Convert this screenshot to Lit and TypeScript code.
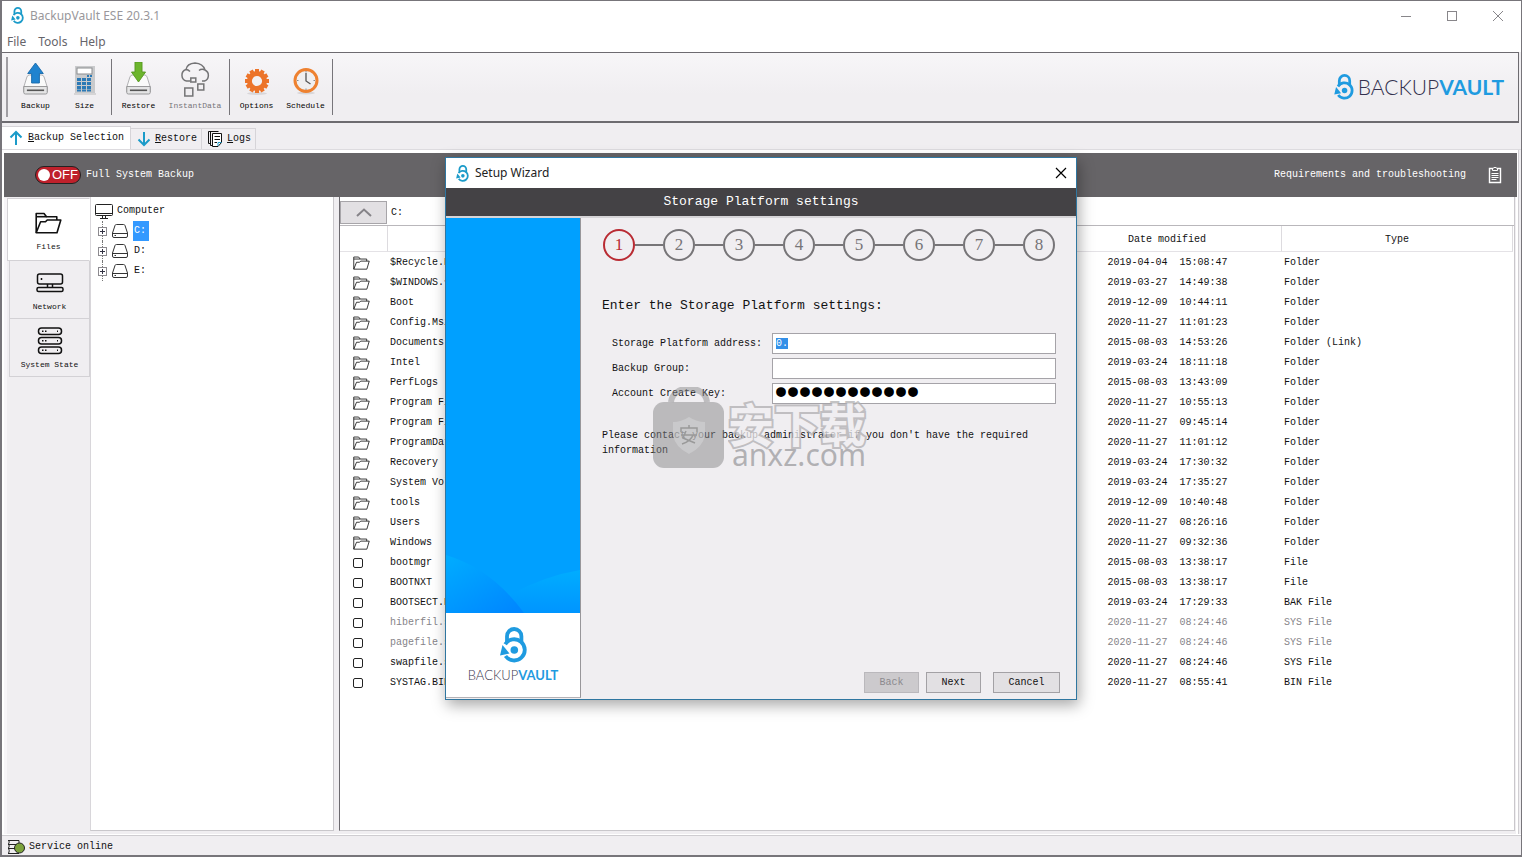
import { LitElement, html, css, svg, nothing } from "lit";
import { customElement, state } from "lit/decorators.js";
import { classMap } from "lit/directives/class-map.js";

interface Entry {
  name: string;
  date: string;
  type: string;
  dim?: boolean;
}

const ENTRIES: Entry[] = [
  { name: "$Recycle.Bin", date: "2019-04-04  15:08:47", type: "Folder" },
  { name: "$WINDOWS.~BT", date: "2019-03-27  14:49:38", type: "Folder" },
  { name: "Boot", date: "2019-12-09  10:44:11", type: "Folder" },
  { name: "Config.Msi", date: "2020-11-27  11:01:23", type: "Folder" },
  { name: "Documents", date: "2015-08-03  14:53:26", type: "Folder (Link)" },
  { name: "Intel", date: "2019-03-24  18:11:18", type: "Folder" },
  { name: "PerfLogs", date: "2015-08-03  13:43:09", type: "Folder" },
  { name: "Program Files", date: "2020-11-27  10:55:13", type: "Folder" },
  { name: "Program Files", date: "2020-11-27  09:45:14", type: "Folder" },
  { name: "ProgramData", date: "2020-11-27  11:01:12", type: "Folder" },
  { name: "Recovery", date: "2019-03-24  17:30:32", type: "Folder" },
  { name: "System Volume", date: "2019-03-24  17:35:27", type: "Folder" },
  { name: "tools", date: "2019-12-09  10:40:48", type: "Folder" },
  { name: "Users", date: "2020-11-27  08:26:16", type: "Folder" },
  { name: "Windows", date: "2020-11-27  09:32:36", type: "Folder" },
  { name: "bootmgr", date: "2015-08-03  13:38:17", type: "File" },
  { name: "BOOTNXT", date: "2015-08-03  13:38:17", type: "File" },
  { name: "BOOTSECT.BAK", date: "2019-03-24  17:29:33", type: "BAK File" },
  { name: "hiberfil.sys", date: "2020-11-27  08:24:46", type: "SYS File", dim: true },
  { name: "pagefile.sys", date: "2020-11-27  08:24:46", type: "SYS File", dim: true },
  { name: "swapfile.sys", date: "2020-11-27  08:24:46", type: "SYS File" },
  { name: "SYSTAG.BIN", date: "2020-11-27  08:55:41", type: "BIN File" },
];

const lock = (w: number, h: number) => html`<svg class="lock" width=${w} height=${h} viewBox="0 0 27 36" fill="none" aria-hidden="true">
  <path d="M7 16V9.2a7 7 0 0 1 14.4 0V16" stroke="currentColor" stroke-width="3.8"/>
  <path d="M5.200 17.2A10.600 10.600 0 1 1 5.500 29" stroke="currentColor" stroke-width="3.8"/>
  <path d="M2.500 18L9.500 26.500L0 28.400Z" fill="currentColor"/>
  <circle cx="14.300" cy="23" r="3.800" fill="currentColor"/>
</svg>`;

const folder = (w: number, h: number, sw: number) => html`<svg width=${w} height=${h} viewBox="0 0 27 22" fill="none" stroke="currentColor" stroke-width=${sw} stroke-linejoin="round" aria-hidden="true">
  <path d="M1.2 20.8V1.5H9l2.5 3.2h10.300V8"/><path d="M1.2 4.700H11.500"/>
  <path d="M1.200 20.800L5.600 9.800H10.500L12.200 8H25.800L22 20.800Z"/>
</svg>`;

const drive = html`<svg width="16" height="14" viewBox="0 0 16 14" fill="none" stroke="#333" aria-hidden="true">
  <path d="M3 1.500Q3.300.5 4.500.5H11.500Q12.700.5 13 1.500L15.500 9V12Q15.500 13.500 14 13.500H2Q.5 13.500.5 12V9Z"/><path d="M1 9.500H15M2.500 11.500H4"/>
</svg>`;

const driveBase = svg`
  <path d="M9 13H25Q27 13 28 15L32 25V30H2V25L6 15Q7 13 9 13Z" fill="#fafafa" stroke="#a9a9ab"/>
  <path d="M2 24.500H32V30.500Q32 32 30 32H4Q2 32 2 30.500Z" fill="#e4e4e5" stroke="#8f8f91"/>
  <path d="M6 28.300H28" stroke="#555" stroke-width="1.600"/>`;

const GEAR_TEETH = Array.from({ length: 12 }, (_, i) => i * 30);

const TOOL_ICONS: Record<string, unknown> = {
  Backup: html`<svg width="25" height="36" viewBox="1 0 32 36" preserveAspectRatio="none" aria-hidden="true">${driveBase}
    <path d="M17 1L27 11.500H22V21H12V11.500H7Z" fill="#1f83cf" stroke="#1769aa"/></svg>`,
  Restore: html`<svg width="25" height="36" viewBox="1 0 32 36" preserveAspectRatio="none" aria-hidden="true">${driveBase}
    <path d="M17 20L8 10H12.500V0H21.500V10H26Z" fill="#6cb52d" stroke="#54951f"/></svg>`,
  Size: html`<svg width="22" height="36" viewBox="0 0 22 36" aria-hidden="true">
    <rect x="1" y="4" width="20" height="27" fill="#c9cacc"/><rect x="3" y="6" width="15" height="6" fill="#fff" stroke="#8c8d90"/>
    ${[16, 20, 24].map((y) => [3, 8, 13].map((x) => svg`<rect x=${x} y=${y} width="4" height="3" fill="#2c79b5"/>`))}
    <rect x="13" y="13" width="2" height="2" fill="#2c79b5"/><rect x="16" y="13" width="2" height="2" fill="#2c79b5"/><path d="M3 28.500H18" stroke="#2c79b5" stroke-width="2" stroke-dasharray="4 1"/><path d="M0 32H22" stroke="#bbb"/></svg>`,
  InstantData: html`<svg width="33" height="36" viewBox="0 0 33 36" fill="none" stroke="#747476" stroke-width="1.500" aria-hidden="true">
    <path d="M11 19H7.500A6 6 0 0 1 7 7.500Q8 1.500 16 1Q24 1.500 26 8A6 6 0 0 1 25.500 19H23M6.500 7.500Q9 7.300 11 9.500M20 8.500Q22.500 6.500 26 8"/>
    <rect x="11.800" y="16" width="5" height="4"/><rect x="18.800" y="22" width="6" height="6"/><rect x="5.800" y="26" width="8" height="8"/></svg>`,
  Options: html`<svg width="26" height="36" viewBox="0 0 26 36" fill="none" aria-hidden="true">
    <ellipse cx="13" cy="31.500" rx="10" ry="1.500" fill="#d8d6d9"/>
    <circle cx="13" cy="19" r="7.600" stroke="#ec742a" stroke-width="5"/>
    ${GEAR_TEETH.map((a) => svg`<rect x="11" y="7" width="4" height="4" fill="#ec742a" transform=${`rotate(${a} 13 19)`}/>`)}</svg>`,
  Schedule: html`<svg width="26" height="36" viewBox="0 0 26 36" fill="none" aria-hidden="true">
    <ellipse cx="13" cy="31" rx="9" ry="1.500" fill="#d8d6d9"/>
    <circle cx="13" cy="18.500" r="11" fill="#f0eff0" stroke="#ee8130" stroke-width="3"/>
    <path d="M13 11V19L17.500 22" stroke="#555" stroke-width="1.300"/><path d="M13 9v1.500M13 26.500V28M4 18.500H5.500M20.500 18.500H22" stroke="#888"/></svg>`,
};

const TOOL_GROUPS = [["Backup", "Size"], ["Restore", "InstantData"], ["Options", "Schedule"]];

const networkIcon = html`<svg width="28" height="20" viewBox="0 0 28 20" fill="none" stroke="#111" stroke-width="1.500" aria-hidden="true">
  <rect x="1.500" y="1" width="25" height="10" rx="2"/><path d="M11.500 11V14.500M16.500 11V14.500M5.500 5V7"/><rect x="1" y="14.500" width="26" height="4" rx="1.500"/></svg>`;
const serverIcon = html`<svg width="26" height="28" viewBox="0 0 26 28" fill="none" stroke="#111" stroke-width="1.500" aria-hidden="true">
  ${[1, 10.5, 20].map((y) => svg`<rect x="1.500" y=${y} width="23" height="6.500" rx="3"/><path d=${`M5 ${y + 3.2}H6.500M8 ${y + 3.2}H9.500M20 ${y + 3.2}H21`}/>`)}</svg>`;

@customElement("setup-wizard")
export class SetupWizard extends LitElement {
  @state() private step = 1;

  static styles = css`
    :host { display: flex; flex-direction: column; box-sizing: border-box; border: 1px solid #2f76a0; background: #f0eef1; font: 10px/15px "Liberation Mono", monospace; color: #111; box-shadow: 2px 5px 14px rgba(0, 0, 0, .35); }
    .title { display: flex; align-items: center; height: 30px; background: #fff; padding: 0 9px 0 10px; gap: 6px; font: 12px/16px "Noto Sans", sans-serif; color: #222; }
    .title .lock { color: #1b9bc9; }
    .title span { flex: 1; }
    .close { border: 0; background: none; padding: 0; width: 12px; height: 12px; display: grid; place-items: center; }
    .banner { margin: 0; height: 28px; background: #444245; color: #fff; font: 13px/28px "Liberation Mono", monospace; text-align: center; border-bottom: 2px solid #d6d4d7; }
    .body { display: grid; grid-template-columns: 135px 1fr; flex: 1; }
    .side { display: flex; flex-direction: column; border-right: 1px solid #98969a; margin-bottom: 1px; border-bottom: 1px solid #b4b2b6; background: #fff; }
    .art { flex: 1; min-height: 0; width: 100%; display: block; background: #00a0ff; }
    .brand { height: 84px; display: flex; flex-direction: column; align-items: center; justify-content: center; gap: 4px; font: 300 13px/16px Lato, sans-serif; color: #3c3a50; }
    .brand .lock, .brand b { color: #1f9be0; }
    .brand b { font-weight: 700; }
    .pane { display: flex; flex-direction: column; padding: 11px 16px 6px 21px; }
    .steps { display: flex; list-style: none; margin: 0; padding: 0 0 0 1px; }
    .steps li { display: flex; align-items: center; color: #777578; }
    .steps li + li::before { content: ""; width: 28px; height: 2px; background: #777578; }
    .num { box-sizing: border-box; width: 32px; height: 32px; border: 2px solid currentColor; border-radius: 50%; display: grid; place-items: center; font: 17px/20px "Liberation Serif", serif; }
    .steps .current { color: #b92b33; }
    h2 { margin: 35px 0 17px; font-size: 13px; line-height: 20px; font-weight: 400; }
    .form { display: grid; grid-template-columns: 160px 284px; row-gap: 4px; align-items: center; padding-left: 10px; }
    .form input { box-sizing: border-box; width: 100%; height: 21px; border: 1px solid #a5a3a8; border-radius: 0; background: #fff; padding: 0 3px; font: inherit; color: #111; outline: none; }
    .form input::selection { background: #3390e8; color: #fff; }
    .form .key { font: 700 20px/19px "Liberation Mono", monospace; color: #000; -webkit-text-stroke: 4px #000; padding: 0 2px; }
    p { margin: 24px 0 0; }
    .buttons { margin-top: auto; display: flex; justify-content: flex-end; gap: 7px; }
    .buttons button { box-sizing: border-box; height: 21px; width: 55px; border: 1px solid #a3a1a5; background: #e2e0e3; color: #111; font: inherit; padding: 0; }
    .buttons .cancel { width: 67px; margin-left: 5px; }
    .buttons button:disabled { background: #cccacd; border-color: #bab8bc; color: #8b898d; }
    .mark { position: absolute; left: 207px; top: 229px; display: flex; gap: 4px; color: rgba(140, 140, 142, .5); pointer-events: none; }
    .words { display: flex; flex-direction: column; padding-top: 14px; }
    .cn { font: 700 46px/42px "Noto Sans CJK SC", sans-serif; color: #f0eef1; -webkit-text-stroke: 4px #b0afb1; paint-order: stroke fill; opacity: .75; }
    .latin { font: 30px/24px "Noto Sans", sans-serif; padding-left: 4px; color: rgba(135, 135, 138, .6); }
  `;

  firstUpdated() {
    const field = this.renderRoot.querySelector<HTMLInputElement>("#address");
    field?.focus();
    field?.select();
  }

  render() {
    return html`
      <div class="title">${lock(13, 17)}<span>Setup Wizard</span>
        <button class="close" aria-label="Close"><svg width="12" height="12" stroke="#000" stroke-width="1.200"><path d="M1 1L11 11M11 1L1 11"/></svg></button>
      </div>
      <h1 class="banner">Storage Platform settings</h1>
      <div class="body">
        <div class="side">
          <svg class="art" viewBox="0 0 134 395" preserveAspectRatio="xMidYMax slice" aria-hidden="true">
            <defs>
              <linearGradient id="g1" x1="0" y1="0" x2="0.800" y2="1"><stop offset="0" stop-color="#00adff"/><stop offset="1" stop-color="#0088ff"/></linearGradient>
              <linearGradient id="g2" x1="0" y1="0" x2="0" y2="1"><stop offset="0" stop-color="#00adff"/><stop offset="1" stop-color="#0095ff"/></linearGradient>
            </defs>
            <rect width="134" height="395" fill="#00a0ff"/>
            <path d="M60 395L66 376Q98 358 134 352V395Z" fill="url(#g2)"/>
            <path d="M0 337Q46 351 78 395H0Z" fill="url(#g1)"/>
          </svg>
          <div class="brand">${lock(27, 36)}<span>BACKUP<b>VAULT</b></span></div>
        </div>
        <div class="pane">
          <ol class="steps">
            ${[1, 2, 3, 4, 5, 6, 7, 8].map((n) => html`<li class=${classMap({ current: n === this.step })}><span class="num">${n}</span></li>`)}
          </ol>
          <h2>Enter the Storage Platform settings:</h2>
          <div class="form">
            <label for="address">Storage Platform address:</label><input id="address" type="text" value="0." />
            <label for="group">Backup Group:</label><input id="group" type="text" />
            <label for="key">Account Create Key:</label><input id="key" class="key" type="password" value="aaaaaaaaaaaa" />
          </div>
          <p>Please contact your backup administrator if you don't have the required information</p>
          <div class="buttons">
            <button disabled>Back</button><button>Next</button><button class="cancel">Cancel</button>
          </div>
        </div>
      </div>
      <div class="mark">
        <svg width="71" height="81" viewBox="0 0 71 81" fill="none" aria-hidden="true">
          <path d="M18 15C20-3 52-3 54 15" stroke="currentColor" stroke-width="6"/>
          <rect y="15" width="71" height="66" rx="11" fill="#858587" fill-opacity=".5"/>
          <path d="M36 30Q44 35 52 35V48Q50 60 36 67Q22 60 20 48V35Q28 35 36 30Z" fill="#d8d7d9" fill-opacity=".5"/>
          <path d="M28 45V41H44V45M36 38V41M28 48H44M33 44L30 51L42 56M40 48Q38 54 29 57" stroke="#999" stroke-width="1.500"/>
        </svg>
        <div class="words"><span class="cn">安下载</span><span class="latin">anxz.com</span></div>
      </div>`;
  }
}

@customElement("app-root")
export class AppRoot extends LitElement {
  @state() private side = "Files";

  static styles = css`
    :host { position: relative; display: flex; flex-direction: column; box-sizing: border-box; height: 100vh; overflow: hidden; border: 1px solid #77757a; border-width: 1px 1px 2px 2px; background: #f0eef1; font: 10px/20px "Liberation Mono", monospace; color: #111; }
    button { font: inherit; color: inherit; background: none; border: 0; padding: 0; }
    svg { flex: none; }
    .title { display: flex; align-items: center; height: 29px; background: #fff; padding: 0 17px 0 9px; gap: 6px; font: 12px/16px "Noto Sans", sans-serif; color: #99979b; }
    .title .lock { color: #1b9bc9; }
    .title .name { flex: 1; }
    .controls { display: flex; gap: 34px; }
    .controls button { width: 12px; height: 12px; display: block; }
    .menu { display: flex; gap: 12px; height: 22px; background: #fff; padding-left: 5px; font: 12px/24px "Noto Sans", sans-serif; color: #66646a; }
    .toolbar { display: flex; align-items: center; border: 1px solid #6d6b70; border-left: 0; border-bottom-width: 2px; margin-right: 2px; height: 68px; padding: 0 14px 0 4px; background: linear-gradient(#f7f6f8, #f0eef1 60%); }
    .grip { width: 2px; height: 60px; background: #a09ea3; margin-right: 3px; }
    .group { display: flex; }
    .tool { display: flex; flex-direction: column; align-items: center; width: 49px; font-size: 8px; line-height: 12px; color: #000; gap: 2px; }
    .tool.wide { width: 64px; color: #77757a; }
    .sep { width: 1px; height: 56px; background: #77757a; margin: 0 2px; }
    .brand { margin-left: auto; display: flex; align-items: center; gap: 4px; font: 300 21px/24px Lato, sans-serif; color: #33304e; }
    .brand .lock, .brand b { color: #1f9be0; }
    .brand b { font-weight: 700; }
    .tabs { display: flex; align-items: flex-end; height: 23px; margin-top: 3px; border-bottom: 1px solid #dddbdf; }
    .tabs button { box-sizing: border-box; display: flex; align-items: center; gap: 4px; height: 21px; padding: 0 4px 0 6px; border: 1px solid #d6d4d8; border-left: 0; border-bottom: 0; }
    .tabs .active { background: #fff; height: 23px; padding: 0 6px 0 7px; gap: 5px; }
    .page { flex: 1; min-height: 0; display: flex; flex-direction: column; background: #fff; padding: 3px 2px 0; margin-right: 2px; border-right: 1px solid #d0ced2; }
    .strip { display: flex; align-items: center; height: 44px; background: #666467; color: #fff; padding: 0 15px 0 31px; margin-right: -1px; }
    .switch { position: relative; display: flex; align-items: center; gap: 5px; }
    .switch input { appearance: none; position: absolute; inset: 0; margin: 0; opacity: 0; }
    .strip a { margin-left: auto; color: #fff; text-decoration: none; display: flex; align-items: center; gap: 22px; }
    .off { font: 13px/16px "Liberation Sans", sans-serif; box-sizing: border-box; height: 18px; width: 46px; border: 1px solid #222; border-radius: 9px; background: #bf202b; display: flex; align-items: center; gap: 2px; padding-left: 2px; }
    .off::before { content: ""; width: 12px; height: 12px; border-radius: 50%; background: #fff; }
    .content { flex: 1; min-height: 0; display: grid; grid-template-columns: 86px 244px 5px 1fr; background: #f0eef1; }
    .sidetabs { display: flex; flex-direction: column; align-items: flex-end; border-left: 3px solid #f7f5f8; margin-top: 1px; }
    .sidetabs button { box-sizing: border-box; width: 81px; height: 58px; display: flex; flex-direction: column; align-items: center; padding-top: 8px; gap: 5px; font-size: 8px; line-height: 10px; border: 1px solid #d3d1d5; border-top: 0; }
    .sidetabs svg { height: 28px; }
    .sidetabs .on { width: 83px; height: 63px; background: #fff; border-top: 1px solid #d3d1d5; border-right-color: #fff; padding-top: 10px; }
    .tree { background: #fff; border: 1px solid #c9c7cb; border-left-color: #d8d6da; border-top: 0; padding: 4px; margin-bottom: 4px; overflow: hidden; }
    .tree ul { list-style: none; margin: 0; padding: 0; }
    .node { display: flex; align-items: center; height: 20px; gap: 4px; }
    .kids .node { gap: 5px; padding-left: 3px; position: relative; }
    .kids .node::before { content: ""; position: absolute; left: 7px; top: 0; height: 20px; border-left: 1px dotted #777; }
    .plus { position: relative; box-sizing: border-box; width: 9px; height: 9px; border: 1px solid #8c8a8f; background: #fff; display: block; }
    .plus svg { display: block; }
    .sel { background: #3399ff; color: #fff; }
    .node .lbl { padding: 0 3px 0 1px; }
    .split { background: #f0eef1; }
    .list { border: 1px solid #c9c7cb; border-left: 1px solid #6b696e; border-top: 0; background: #fff; margin: 0 1px 4px 0; overflow: hidden; }
    .path { display: flex; align-items: center; gap: 4px; height: 29px; padding-top: 3px; border-bottom: 1px solid #b9b7bb; box-sizing: border-box; }
    .path button { box-sizing: border-box; width: 47px; height: 23px; border: 1px solid #a7a5a9; background: #e2e0e3; display: grid; place-items: center; }
    table { width: 100%; border-collapse: separate; border-spacing: 0; table-layout: fixed; padding-right: 1px; }
    th { box-sizing: border-box; height: 26px; padding: 2px 0 0; font-weight: 400; text-align: center; border-right: 1px solid #dddbdf; border-bottom: 1px solid #e4e2e6; }
    td { height: 18px; padding: 2px 0 0 2px; white-space: pre; overflow: hidden; line-height: 18px; }
    .c-icon { width: 48px; }
    .c-date { width: 229px; }
    .c-type { width: 231px; }
    .icon { padding-left: 13px; padding-top: 2px; line-height: 0; }
    .icon input { appearance: none; box-sizing: border-box; width: 10px; height: 10px; border: 1px solid #222; border-radius: 2px; margin: 0; display: block; }
    .date { text-align: center; padding-left: 0; }
    .dim td { color: #858388; }
    .status { box-sizing: border-box; display: flex; align-items: center; gap: 4px; height: 20px; padding: 2px 0 0 5px; border-top: 1px solid #cfcdd1; box-shadow: 0 -1px 0 #fff; }
    setup-wizard { position: absolute; inset: 0; margin: auto; width: 632px; height: 543px; left: -1px; top: 1px; }
  `;

  private tool(name: string) {
    return html`<button class=${classMap({ tool: true, wide: name === "InstantData" })}>${TOOL_ICONS[name]}<span>${name}</span></button>`;
  }

  private sideTab(name: string, icon: unknown) {
    return html`<button class=${this.side === name ? "on" : ""} @click=${() => (this.side = name)}>${icon}<span>${name}</span></button>`;
  }

  render() {
    return html`
      <header class="title">${lock(13, 17)}<span class="name">BackupVault ESE 20.3.1</span>
        <div class="controls">
          <button aria-label="Minimize"><svg width="12" height="12" stroke="#88868a"><path d="M1 6.500H11"/></svg></button>
          <button aria-label="Maximize"><svg width="12" height="12" fill="none" stroke="#88868a"><rect x="1.500" y="1.500" width="9" height="9"/></svg></button>
          <button aria-label="Close"><svg width="12" height="12" stroke="#88868a"><path d="M1 1L11 11M11 1L1 11"/></svg></button>
        </div>
      </header>
      <nav class="menu"><button>File</button><button>Tools</button><button>Help</button></nav>
      <div class="toolbar">
        <span class="grip"></span>
        ${TOOL_GROUPS.map((g) => html`<div class="group">${g.map((n) => this.tool(n))}</div><span class="sep"></span>`)}
        <div class="brand">${lock(20, 26)}<span>BACKUP<b>VAULT</b></span></div>
      </div>
      <nav class="tabs">
        <button class="active"><svg width="14" height="16" fill="none" stroke="#1b9bc9" stroke-width="2"><path d="M7 15V2M1.500 7.500L7 2L12.500 7.500"/></svg><span><u>B</u>ackup Selection</span></button>
        <button><svg width="14" height="16" fill="none" stroke="#1b9bc9" stroke-width="2"><path d="M7 1V14M1.500 8.500L7 14L12.500 8.500"/></svg><span><u>R</u>estore</span></button>
        <button><svg width="15" height="16" fill="none" stroke="#111"><path d="M3.500.5H.5V12.500H2.500M2.500.5V14.500H4.500M10.500.5H2.500"/><path d="M4.500 2.500H13.500V11.500L10 15.500H4.500Z" fill="#fff"/><path d="M6.500 5.500H12M6.500 8.500H12M6.500 11.500H9"/><path d="M10 15V11.500H13.500" stroke="#1b9bc9"/></svg><span><u>L</u>ogs</span></button>
      </nav>
      <main class="page">
        <div class="strip">
          <label class="switch"><input type="checkbox" /><span class="off">OFF</span><span>Full System Backup</span></label>
          <a href="#requirements">Requirements and troubleshooting
            <svg width="14" height="18" fill="none" stroke="#fff"><path d="M4 2.500H1.500V16.500H12.500V2.500H10" stroke-width="1.400"/><path d="M4.500 4.500V2H6Q7 0 8 2H9.500V4.500ZM3.500 7.500H10.500M3.500 9.500H10.500M3.500 11.500H10.500M3.500 13.500H8.500"/></svg></a>
        </div>
        <div class="content">
          <nav class="sidetabs">
            ${this.sideTab("Files", folder(27, 24, 1.6))}
            ${this.sideTab("Network", networkIcon)}
            ${this.sideTab("System State", serverIcon)}
          </nav>
          <div class="tree">
            <div class="node"><svg width="18" height="15" fill="none" stroke="#222"><rect x=".5" y=".5" width="17" height="11" rx="1"/><path d="M1 9.500H17M7.500 12V14M10.500 12V14M5 14.500H13"/></svg><span>Computer</span></div>
            <ul class="kids">
              ${["C:", "D:", "E:"].map((d, i) => html`<li class="node"><button class="plus" aria-label="Expand"><svg width="7" height="7" stroke="#334"><path d="M1 3.500H6M3.500 1V6"/></svg></button>${drive}<span class=${classMap({ lbl: true, sel: i === 0 })}>${d}</span></li>`)}
            </ul>
          </div>
          <div class="split"></div>
          <section class="list">
            <div class="path"><button aria-label="Up"><svg width="16" height="9" fill="none" stroke="#858388" stroke-width="2"><path d="M1 8L8 1.500L15 8"/></svg></button><span>C:</span></div>
            <table>
              <thead><tr><th class="c-icon" aria-label="Selected"></th><th aria-label="Name"></th><th class="c-date">Date modified</th><th class="c-type">Type</th></tr></thead>
              <tbody>
                ${ENTRIES.map((e) => html`<tr class=${e.dim ? "dim" : nothing}>
                  <td class="icon">${e.type.startsWith("Folder") ? folder(17, 14, 1.3) : html`<input type="checkbox" aria-label=${e.name} />`}</td>
                  <td>${e.name}</td><td class="date">${e.date}</td><td>${e.type}</td></tr>`)}
              </tbody>
            </table>
          </section>
        </div>
      </main>
      <footer class="status">
        <svg width="18" height="16" fill="none" stroke="#222"><path d="M1 1.500H12M1 5.500H10M1 9.500H8M1 14.500H12M1.500 1Q3 3 1.500 5Q3 7 1.500 9Q3 12 1.500 14.500M12 1.500V4"/><circle cx="12.500" cy="9" r="5" fill="#7ca23c"/></svg>
        <span>Service online</span>
      </footer>
      <setup-wizard role="dialog" aria-label="Setup Wizard"></setup-wizard>`;
  }
}
